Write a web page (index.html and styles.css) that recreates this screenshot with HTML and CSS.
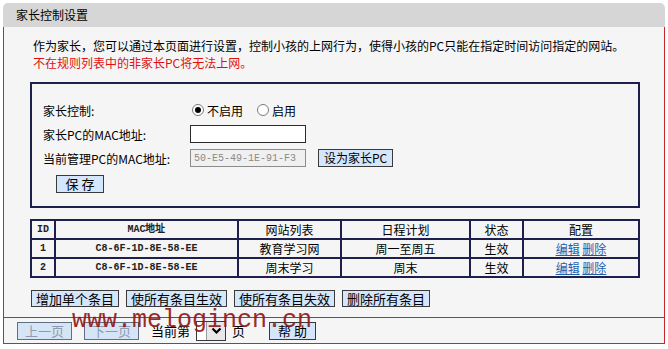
FILE: index.html
```html
<!DOCTYPE html>
<html lang="zh-CN">
<head>
    <meta charset="UTF-8">
    <title>家长控制设置</title>
    <link rel="stylesheet" href="styles.css">
</head>
<body>
    <div class="panel">
        <div class="title">家长控制设置</div>
        <div class="main">
            <p class="intro">作为家长，您可以通过本页面进行设置，控制小孩的上网行为，使得小孩的PC只能在指定时间访问指定的网站。</p>
            <p class="warn">不在规则列表中的非家长PC将无法上网。</p>

            <div class="box">
                <div class="row">
                    <span class="label">家长控制:</span>
                    <label class="opt"><input type="radio" name="ctl" checked>不启用</label>
                    <label class="opt"><input type="radio" name="ctl">启用</label>
                </div>
                <div class="row">
                    <span class="label">家长PC的MAC地址:</span>
                    <input class="field" type="text">
                </div>
                <div class="row">
                    <span class="label">当前管理PC的MAC地址:</span>
                    <input class="field mac" type="text" value="50-E5-49-1E-91-F3" disabled>
                    <button class="btn set">设为家长PC</button>
                </div>
                <button class="btn save">保 存</button>
            </div>

            <table class="rules">
                <colgroup>
                    <col style="width:24px">
                    <col style="width:183px">
                    <col style="width:103px">
                    <col style="width:129px">
                    <col style="width:53px">
                    <col>
                </colgroup>
                <tr>
                    <td class="mono">ID</td>
                    <td class="mono">MAC地址</td>
                    <td>网站列表</td>
                    <td>日程计划</td>
                    <td>状态</td>
                    <td>配置</td>
                </tr>
                <tr>
                    <td class="mono">1</td>
                    <td class="mono">C8-6F-1D-8E-58-EE</td>
                    <td>教育学习网</td>
                    <td>周一至周五</td>
                    <td>生效</td>
                    <td><a href="#">编辑</a> <a href="#">删除</a></td>
                </tr>
                <tr>
                    <td class="mono">2</td>
                    <td class="mono">C8-6F-1D-8E-58-EE</td>
                    <td>周末学习</td>
                    <td>周末</td>
                    <td>生效</td>
                    <td><a href="#">编辑</a> <a href="#">删除</a></td>
                </tr>
            </table>

            <div class="actions">
                <button class="btn">增加单个条目</button>
                <button class="btn">使所有条目生效</button>
                <button class="btn">使所有条目失效</button>
                <button class="btn">删除所有条目</button>
            </div>
        </div>

        <div class="footer">
            <button class="btn off">上一页</button>
            <button class="btn off">下一页</button>
            <span class="page-txt">当前第</span>
            <span class="sel"><span class="sel-val"></span><span class="sel-arrow"><svg width="11" height="8" viewBox="0 0 11 8"><path d="M1.5 1.5 L5.5 5.5 L9.5 1.5" fill="none" stroke="#000" stroke-width="2.2"/></svg></span></span>
            <span class="page-txt">页</span>
            <button class="btn help">帮 助</button>
        </div>

        <div class="watermark">www.melogincn.cn</div>
    </div>
</body>
</html>
```

FILE: styles.css
```css
body {
    margin: 0;
    background: #fff;
    font-family: "Noto Sans CJK SC", sans-serif;
    font-size: 12px;
    color: #000;
}

.panel {
    position: relative;
    width: 662px;
    margin: 3px 0 0 3px;
}

.title {
    height: 24px;
    line-height: 24px;
    padding-left: 13px;
    background: #d6d6d6;
    border-radius: 5px 5px 0 0;
}

.main {
    background: #f5f5f5;
    border-left: 1px solid #c8282c;
    border-right: 1px solid #c8282c;
    padding: 10px 24px 10px 26px;
}

.intro,
.warn {
    margin: 0;
    padding-left: 3px;
    line-height: 17px;
}

.warn {
    color: #e01010;
}

.box {
    margin-top: 11px;
    border: 2px solid #1f1f4e;
    padding: 14px 11px 13px;
}

.row {
    display: flex;
    align-items: center;
    height: 24px;
}

.label {
    width: 147px;
}

.opt {
    display: flex;
    align-items: center;
    margin-right: 12px;
}

.opt input {
    appearance: none;
    width: 12px;
    height: 12px;
    margin: 0 3px 0 2px;
    border: 1px solid #7b7b7b;
    border-radius: 50%;
    background: #fff;
    position: relative;
}

.opt input:checked::after {
    content: "";
    position: absolute;
    left: 2px;
    top: 2px;
    width: 6px;
    height: 6px;
    border-radius: 50%;
    background: #000;
}

.field {
    box-sizing: border-box;
    width: 116px;
    height: 18px;
    margin: 0;
    border: 1px solid #2a2a2a;
    background: #fff;
    padding: 0 3px;
}

.field.mac {
    background: #f0f0f0;
    border-color: #8c8c8c;
    color: #8a8a8a;
    font-family: "Liberation Mono", monospace;
    font-size: 10px;
}

.btn {
    box-sizing: border-box;
    height: 18px;
    margin: 0;
    padding: 0 4px;
    border: 1px solid #3a3a3a;
    background: #d4e6fb;
    color: #000;
    font-family: "Noto Sans CJK SC", sans-serif;
    font-size: 12px;
    line-height: 16px;
}

.set {
    margin-left: 12px;
    padding: 0 5px;
}

.save {
    display: block;
    margin: 5px 0 0 13px;
    width: 48px;
    font-size: 13px;
}

.rules {
    width: 610px;
    margin-top: 11px;
    border-collapse: collapse;
    table-layout: fixed;
}

.rules td {
    border: 2px solid #1f1f4e;
    height: 17px;
    padding: 0;
    text-align: center;
    line-height: 16px;
}

.rules .mono {
    font-family: "Liberation Mono", monospace;
    font-size: 10px;
    font-weight: bold;
    color: #222;
}

.rules a {
    color: #1f5fae;
}

.actions {
    display: flex;
    gap: 7px;
    margin-top: 12px;
    padding-left: 1px;
}

.actions .btn {
    height: 17px;
    font-size: 13px;
    line-height: 15px;
}

.footer {
    display: flex;
    align-items: center;
    height: 25px;
    border: 1px solid #c8282c;
    background: #f5f5f5;
    padding-left: 13px;
}

.footer .btn {
    font-size: 13px;
    padding: 0 7px;
    margin-right: 12px;
}

.footer .off {
    background: #d6e5f5;
    color: #8c9bb0;
    border-color: #5f6f85;
}

.page-txt {
    font-size: 13px;
    margin-right: 6px;
}

.sel {
    display: flex;
    width: 30px;
    height: 20px;
    box-sizing: border-box;
    border: 1px solid #3a3a3a;
    background: #fff;
    margin-right: 6px;
}

.sel-val {
    width: 9px;
}

.sel-arrow {
    flex: 1;
    display: flex;
    align-items: center;
    justify-content: center;
    background: #e8e8e8;
    border-left: 1px solid #9a9a9a;
}

.help {
    margin-left: 18px;
    width: 47px;
}

.watermark {
    position: absolute;
    left: 69px;
    top: 305px;
    font-family: "Liberation Mono", monospace;
    font-size: 25px;
    line-height: 25px;
    color: #8e1616;
    opacity: 0.9;
    pointer-events: none;
}
```
